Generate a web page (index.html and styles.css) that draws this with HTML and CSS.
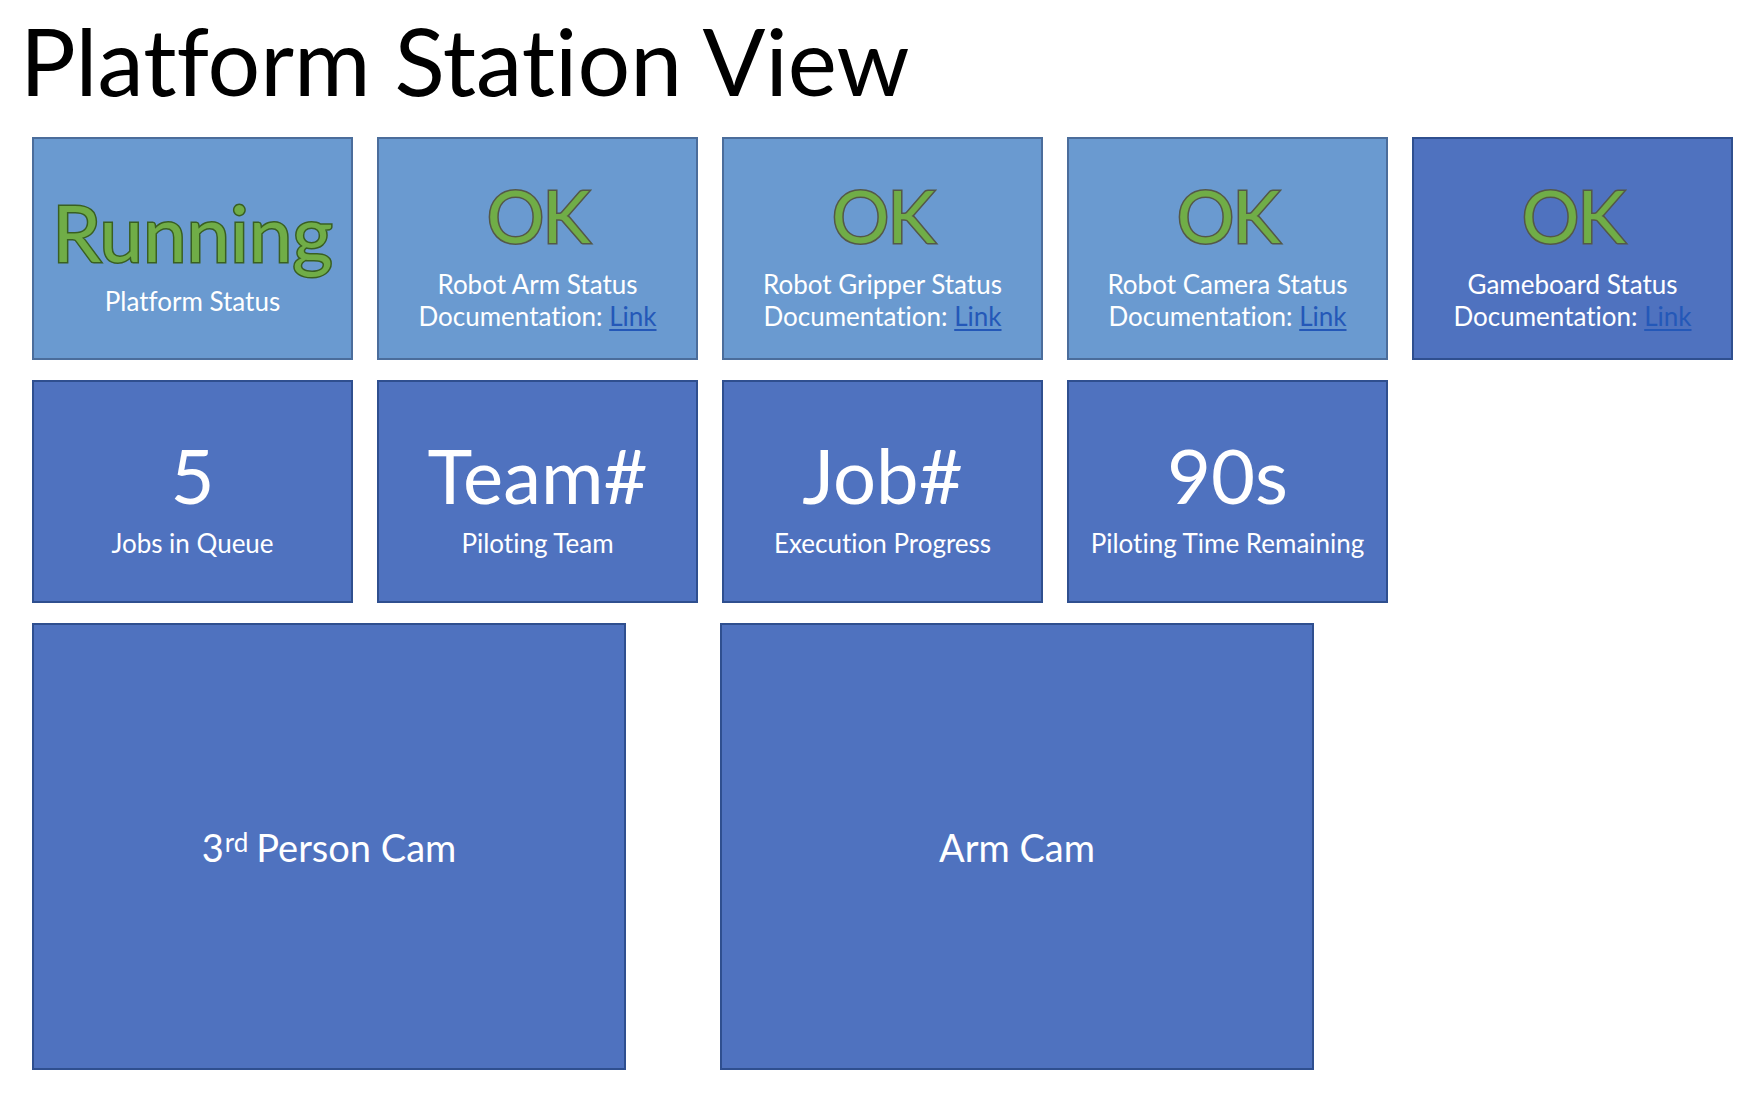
FILE: index.html
```html
<!DOCTYPE html>
<html>
<head>
<meta charset="utf-8">
<title>Platform Station View</title>
<link rel="stylesheet" href="styles.css">
</head>
<body>
<h1 class="title">Platform Station View</h1>
<main class="board">
  <div class="row">
    <section class="tile tile-light">
      <div class="big big-ok big-running">Running</div>
      <div class="label label-running">Platform Status</div>
    </section>
    <section class="tile tile-light">
      <div class="big big-ok">OK</div>
      <div class="label label-ok">Robot Arm Status<br>Documentation: <a href="#">Link</a></div>
    </section>
    <section class="tile tile-light">
      <div class="big big-ok">OK</div>
      <div class="label label-ok">Robot Gripper Status<br>Documentation: <a href="#">Link</a></div>
    </section>
    <section class="tile tile-light">
      <div class="big big-ok">OK</div>
      <div class="label label-ok">Robot Camera Status<br>Documentation: <a href="#">Link</a></div>
    </section>
    <section class="tile tile-dark">
      <div class="big big-ok">OK</div>
      <div class="label label-ok">Gameboard Status<br>Documentation: <a href="#">Link</a></div>
    </section>
  </div>
  <div class="row">
    <section class="tile tile-dark">
      <div class="big">5</div>
      <div class="label">Jobs in Queue</div>
    </section>
    <section class="tile tile-dark">
      <div class="big">Team#</div>
      <div class="label">Piloting Team</div>
    </section>
    <section class="tile tile-dark">
      <div class="big">Job#</div>
      <div class="label">Execution Progress</div>
    </section>
    <section class="tile tile-dark">
      <div class="big">90s</div>
      <div class="label">Piloting Time Remaining</div>
    </section>
  </div>
  <div class="row row-cams">
    <section class="cam">3<sup>rd</sup> Person Cam</section>
    <section class="cam">Arm Cam</section>
  </div>
</main>
</body>
</html>
```
FILE: styles.css
```css
html, body {
  margin: 0;
  padding: 0;
  background: #ffffff;
}
body {
  font-family: Lato, "Open Sans", sans-serif;
  font-variant-ligatures: none;
  color: #000;
}
.title {
  margin: 0;
  padding: 10px 0 0 20px;
  height: 116px;
  box-sizing: border-box;
  font-weight: 400;
  font-size: 93px;
  line-height: 100px;
  letter-spacing: 0;
}
.board {
  padding: 21px 0 0 32px;
  display: flex;
  flex-direction: column;
  gap: 20px;
}
.row {
  display: flex;
  gap: 24px;
}
.tile {
  width: 321px;
  height: 223px;
  box-sizing: border-box;
  padding-top: 11px;
  display: flex;
  flex-direction: column;
  align-items: center;
  justify-content: center;
  text-align: center;
  color: #ffffff;
}
.tile-light {
  background: #6a9ad0;
  border: 2px solid #4b6d9b;
}
.tile-dark {
  background: #4f72bf;
  border: 2px solid #2f4f8f;
}
.big {
  font-size: 76px;
  line-height: 80px;
  color: #ffffff;
}
.big-ok {
  font-size: 72px;
  line-height: 76px;
  letter-spacing: -2px;
  color: #70ad47;
  -webkit-text-stroke: 3px #545848;
  paint-order: stroke fill;
}
.big-running {
  font-size: 78px;
  line-height: 80px;
  letter-spacing: 0;
  -webkit-text-stroke-color: #395f22;
}
.label {
  font-size: 26px;
  line-height: 32px;
  margin-top: 12px;
}
.label-ok {
  margin-top: 15px;
}
.label-running {
  margin-top: 13px;
}
.label a {
  color: #2458b8;
  text-decoration: underline;
  text-decoration-thickness: 2px;
  text-underline-offset: 3px;
}
.row-cams {
  gap: 94px;
}
.cam {
  width: 594px;
  height: 447px;
  box-sizing: border-box;
  background: #4f72bf;
  border: 2px solid #2f4f8f;
  color: #ffffff;
  display: flex;
  align-items: center;
  justify-content: center;
  font-size: 38px;
  padding-top: 0;
}
.cam sup {
  font-size: 26px;
  line-height: 0;
  position: relative;
  top: -5px;
  vertical-align: super;
  margin-left: 1px;
  margin-right: 8px;
}
```
